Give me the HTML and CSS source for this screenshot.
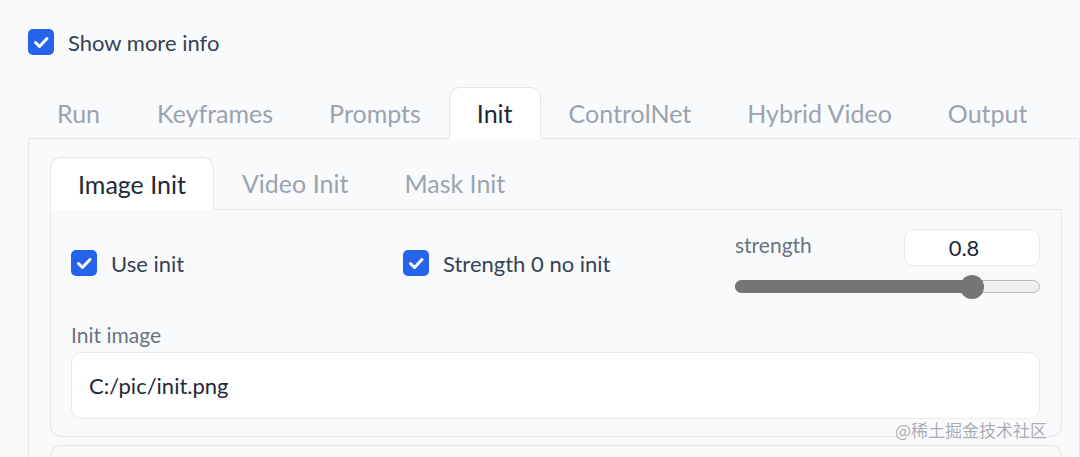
FILE: index.html
```html
<!DOCTYPE html>
<html>
<head>
<meta charset="utf-8">
<link rel="stylesheet" href="styles.css">
</head>
<body>
<div class="page">
  <label class="check show-more">
    <span class="box"><svg viewBox="0 0 26 26" width="26" height="26"><path d="M7.5 13.5 L11.5 17.5 L19 9.5" fill="none" stroke="#fff" stroke-width="3" stroke-linecap="round" stroke-linejoin="round"/></svg></span>
    <span class="check-text">Show more info</span>
  </label>

  <div class="tabs outer-tabs">
    <div class="tab">Run</div>
    <div class="tab">Keyframes</div>
    <div class="tab">Prompts</div>
    <div class="tab selected">Init</div>
    <div class="tab">ControlNet</div>
    <div class="tab">Hybrid Video</div>
    <div class="tab">Output</div>
    <div class="tab-fill"></div>
  </div>

  <div class="outer-panel">
    <div class="tabs inner-tabs">
      <div class="tab selected">Image Init</div>
      <div class="tab">Video Init</div>
      <div class="tab">Mask Init</div>
      <div class="tab-fill"></div>
    </div>
    <div class="inner-box">
      <div class="row">
        <label class="check">
          <span class="box"><svg viewBox="0 0 26 26" width="26" height="26"><path d="M7.5 13.5 L11.5 17.5 L19 9.5" fill="none" stroke="#fff" stroke-width="3" stroke-linecap="round" stroke-linejoin="round"/></svg></span>
          <span class="check-text">Use init</span>
        </label>
        <label class="check">
          <span class="box"><svg viewBox="0 0 26 26" width="26" height="26"><path d="M7.5 13.5 L11.5 17.5 L19 9.5" fill="none" stroke="#fff" stroke-width="3" stroke-linecap="round" stroke-linejoin="round"/></svg></span>
          <span class="check-text">Strength 0 no init</span>
        </label>
        <div class="slider-block">
          <div class="slider-head">
            <span class="field-label">strength</span>
            <div class="num-box">0.8</div>
          </div>
          <div class="slider">
            <div class="slider-fill" style="width: 78%"></div>
            <div class="slider-thumb" style="left: 78%"></div>
          </div>
        </div>
      </div>
      <div class="field">
        <span class="field-label">Init image</span>
        <div class="text-box">C:/pic/init.png</div>
      </div>
    </div>
    <div class="next-box"></div>
  </div>
  <div class="watermark">@稀土掘金技术社区</div>
</div>
</body>
</html>
```

FILE: styles.css
```css
* { box-sizing: border-box; }
html, body { margin: 0; padding: 0; }
body {
  background: #f8fafc;
  font-family: "Lato", "Noto Sans", sans-serif;
  color: #374151;
  width: 1080px;
  height: 457px;
  overflow: hidden;
}
.page {
  position: relative;
  height: 457px;
  overflow: hidden;
  padding: 29px 0 0 28px;
}
.check {
  display: flex;
  align-items: center;
  gap: 14px;
}
.box {
  width: 26px;
  height: 26px;
  border-radius: 5px;
  background: #2563eb;
  display: flex;
  flex: none;
}
.check-text {
  font-size: 22px;
  color: #374151;
}
.show-more { height: 26px; }

.tabs {
  display: flex;
  align-items: flex-end;
}
.tab {
  padding: 0 28px;
  height: 52px;
  display: flex;
  align-items: center;
  font-size: 25px;
  color: #9ca3af;
  border-bottom: 1px solid #e5e7eb;
  white-space: nowrap;
}
.tab.selected {
  background: #fff;
  color: #1f2937;
  border: 1px solid #e5e7eb;
  border-bottom: 1px solid #fff;
  border-radius: 11px 11px 0 0;
  padding: 0 27px;
}
.tab-fill {
  flex: 1;
  height: 52px;
  border-bottom: 1px solid #e5e7eb;
}
.outer-tabs {
  margin-top: 32px;
  width: 1052px;
}
.outer-tabs .tab:first-child { padding-left: 29px; padding-right: 29px; }
.outer-panel {
  width: 1052px;
  border-left: 1px solid #e5e7eb;
  border-right: 1px solid #e5e7eb;
  padding: 18px 17px 0 21px;
  height: 330px;
}
.inner-tabs {
  width: 1012px;
}
.inner-tabs .tab { height: 53px; }
.inner-tabs .tab-fill { height: 53px; }
.inner-box {
  width: 1012px;
  border: 1px solid #e5e7eb;
  border-top: none;
  border-radius: 0 0 11px 11px;
  padding: 19px 21px 17px 20px;
}
.row {
  display: grid;
  grid-template-columns: 332px 332px 1fr;
  align-items: center;
}
.slider-block {
  display: flex;
  flex-direction: column;
}
.slider-head {
  display: flex;
  justify-content: space-between;
  align-items: center;
}
.field-label {
  font-size: 21px;
  color: #6b7280;
}
.slider-head .field-label { margin-top: -6px; }
.num-box {
  width: 136px;
  height: 37px;
  background: #fff;
  border: 1px solid #e8eaee;
  border-radius: 9px;
  display: flex;
  align-items: center;
  justify-content: center;
  font-size: 22px;
  color: #1f2937;
  padding-right: 16px;
}
.slider {
  position: relative;
  margin-top: 14px;
  height: 13px;
  border-radius: 7px;
  background: #efefef;
  border: 1px solid #b7b7b7;
  margin-bottom: 4px;
}
.slider-fill {
  position: absolute;
  left: -1px;
  top: -1px;
  bottom: -1px;
  background: #757575;
  border-radius: 7px;
}
.slider-thumb {
  position: absolute;
  top: 50%;
  width: 24px;
  height: 24px;
  margin: -12px 0 0 -12px;
  border-radius: 50%;
  background: #757575;
}
.field {
  display: flex;
  flex-direction: column;
  margin-top: 25px;
  gap: 5px;
}
.text-box {
  height: 67px;
  background: #fff;
  border: 1px solid #e8eaee;
  border-radius: 11px;
  display: flex;
  align-items: center;
  padding-left: 17px;
  font-size: 22px;
  color: #1f2937;
}
.next-box {
  margin-top: 8px;
  width: 1012px;
  height: 40px;
  border: 1px solid #e5e7eb;
  border-bottom: none;
  border-radius: 11px 11px 0 0;
}
.watermark {
  position: absolute;
  right: 33px;
  bottom: 15px;
  font-family: "Noto Sans CJK SC", sans-serif;
  font-size: 17px;
  color: #a9adb3;
  text-shadow: 0 0 2px #fff, 0 0 2px #fff;
}
```
